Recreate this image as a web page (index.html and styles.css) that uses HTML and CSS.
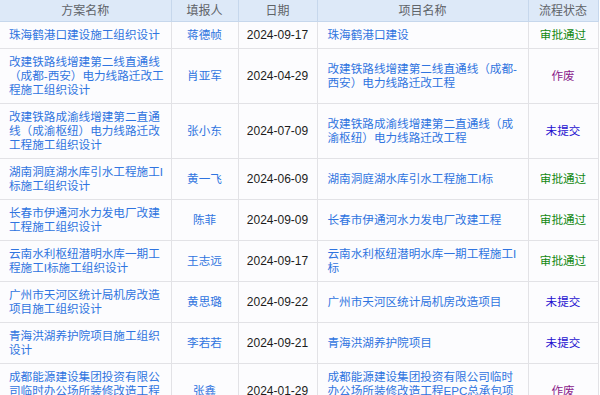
FILE: index.html
```html
<!DOCTYPE html>
<html lang="zh-CN">
<head>
<meta charset="utf-8">
<title>施工组织设计</title>
<link rel="stylesheet" href="styles.css">
</head>
<body>
<table class="grid">
  <colgroup>
    <col class="c-name">
    <col class="c-user">
    <col class="c-date">
    <col class="c-proj">
    <col class="c-state">
  </colgroup>
  <thead>
    <tr><th>方案名称</th><th>填报人</th><th>日期</th><th>项目名称</th><th>流程状态</th></tr>
  </thead>
  <tbody>
    <tr><td class="link">珠海鹤港口建设施工组织设计</td><td class="link center">蒋德帧</td><td class="date">2024-09-17</td><td class="link proj">珠海鹤港口建设</td><td class="center ok">审批通过</td></tr>
    <tr><td class="link">改建铁路线增建第二线直通线（成都-西安）电力线路迁改工程施工组织设计</td><td class="link center">肖亚军</td><td class="date">2024-04-29</td><td class="link proj">改建铁路线增建第二线直通线（成都-西安）电力线路迁改工程</td><td class="center void">作废</td></tr>
    <tr><td class="link">改建铁路成渝线增建第二直通线（成渝枢纽）电力线路迁改工程施工组织设计</td><td class="link center">张小东</td><td class="date">2024-07-09</td><td class="link proj">改建铁路成渝线增建第二直通线（成渝枢纽）电力线路迁改工程</td><td class="center todo">未提交</td></tr>
    <tr><td class="link">湖南洞庭湖水库引水工程施工I标施工组织设计</td><td class="link center">黄一飞</td><td class="date">2024-06-09</td><td class="link proj">湖南洞庭湖水库引水工程施工I标</td><td class="center ok">审批通过</td></tr>
    <tr><td class="link">长春市伊通河水力发电厂改建工程施工组织设计</td><td class="link center">陈菲</td><td class="date">2024-09-09</td><td class="link proj">长春市伊通河水力发电厂改建工程</td><td class="center ok">审批通过</td></tr>
    <tr><td class="link">云南水利枢纽潜明水库一期工程施工I标施工组织设计</td><td class="link center">王志远</td><td class="date">2024-09-17</td><td class="link proj">云南水利枢纽潜明水库一期工程施工I标</td><td class="center ok">审批通过</td></tr>
    <tr><td class="link">广州市天河区统计局机房改造项目施工组织设计</td><td class="link center">黄思璐</td><td class="date">2024-09-22</td><td class="link proj">广州市天河区统计局机房改造项目</td><td class="center todo">未提交</td></tr>
    <tr><td class="link">青海洪湖养护院项目施工组织设计</td><td class="link center">李若若</td><td class="date">2024-09-21</td><td class="link proj">青海洪湖养护院项目</td><td class="center todo">未提交</td></tr>
    <tr><td class="link">成都能源建设集团投资有限公司临时办公场所装修改造工程施工组织设计</td><td class="link center">张鑫</td><td class="date">2024-01-29</td><td class="link proj">成都能源建设集团投资有限公司临时办公场所装修改造工程EPC总承包项目</td><td class="center void">作废</td></tr>
  </tbody>
</table>
</body>
</html>
```

FILE: styles.css
```css
html, body {
  margin: 0;
  padding: 0;
  background: #ffffff;
}
body {
  font-family: "Liberation Sans", "Noto Sans CJK SC", sans-serif;
  font-size: 11.6px;
  line-height: 14px;
  overflow: hidden;
}
.grid {
  border-collapse: collapse;
  table-layout: fixed;
  width: 598px;
  background: #fcfcfe;
}
.c-name { width: 171px; }
.c-user { width: 67px; }
.c-date { width: 79px; }
.c-proj { width: 211px; }
.c-state { width: 70px; }

.grid th {
  background: #dde9f8;
  color: #5f6368;
  font-size: 12px;
  font-weight: normal;
  height: 21px;
  padding: 0 6px;
  text-align: center;
  border-right: 1px solid #c6d7ec;
  border-bottom: 1px solid #c6d7ec;
}
.grid td {
  padding: 6px 6px 6px 9px;
  border-right: 1px solid #e2e2e6;
  border-bottom: 1px solid #e2e2e6;
  vertical-align: middle;
  color: #222;
  word-break: break-all;
}
.grid td.proj { padding-left: 10px; padding-right: 8px; }
.grid td.link { color: #2f74e0; }
.grid td.center { text-align: center; padding-left: 6px; }
.grid td.date { text-align: center; color: #1c1c1c; padding-left: 6px; font-size: 12px; }
.grid td.ok { color: #118811; }
.grid td.void { color: #8a1a8a; }
.grid td.todo { color: #2410d0; }
```
